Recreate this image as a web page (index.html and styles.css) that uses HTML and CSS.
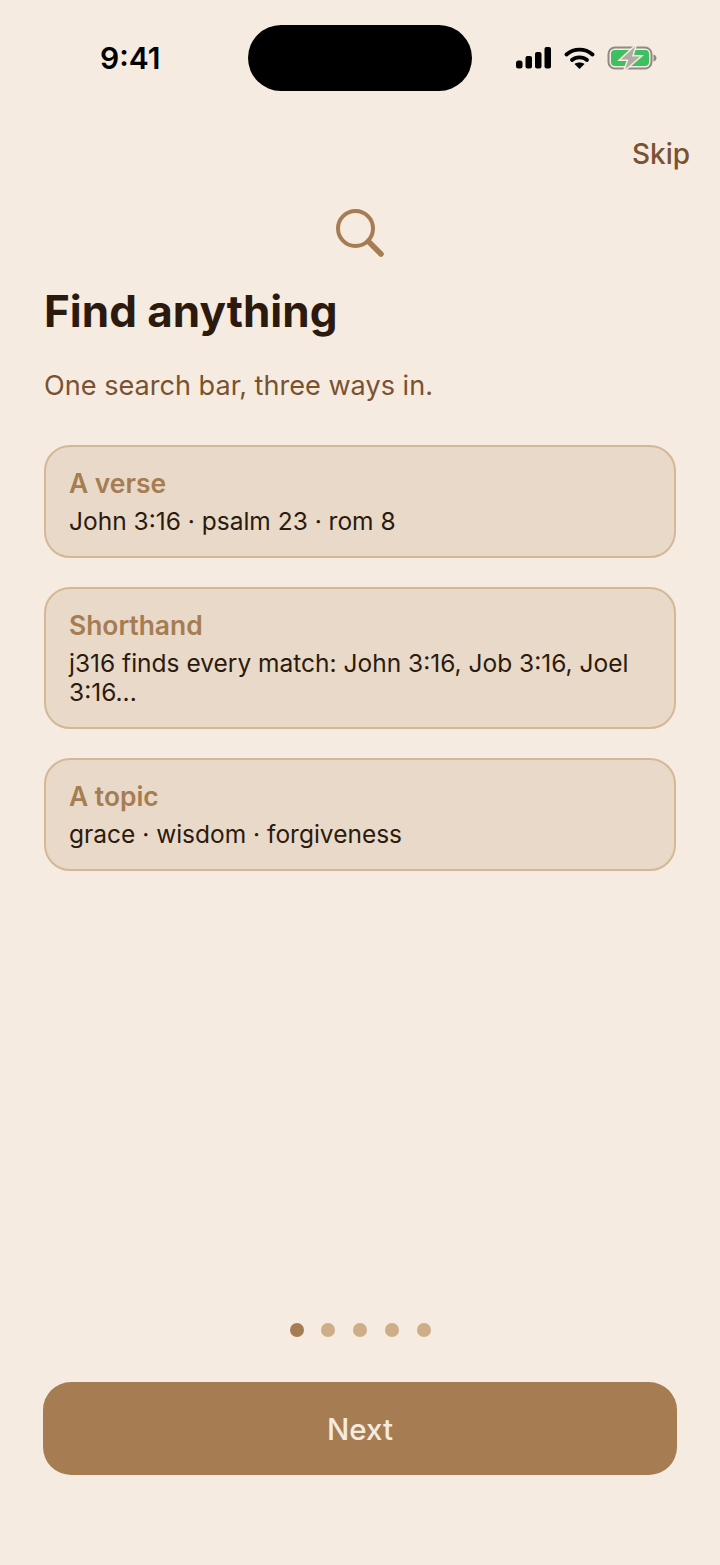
FILE: index.html
```html
<!DOCTYPE html>
<html lang="en">
<head>
    <meta charset="UTF-8">
    <title>Find anything</title>
    <link rel="stylesheet" href="styles.css">
</head>

<body>
<div class="screen">
    <!-- Status Bar -->
    <div class="status-bar">
        <span class="time">9:41</span>
        <div class="island"></div>
        <div class="status-icons">
            <svg width="35" height="22" viewBox="0 0 35 22">
                <rect x="0" y="13.500" width="6.500" height="8" rx="2.500" fill="#000"/>
                <rect x="9.500" y="9" width="6.500" height="12.500" rx="2" fill="#000"/>
                <rect x="19" y="5" width="6.500" height="16.500" rx="2" fill="#000"/>
                <rect x="28.500" y="0" width="6.500" height="21.500" rx="2" fill="#000"/>
            </svg>
            <svg class="wifi" width="31" height="22" viewBox="0 0 31 22">
                <path d="M2.500 7.500 C10 1 21 1 28.500 7.500" fill="none" stroke="#000" stroke-width="3.800" stroke-linecap="round"/>
                <path d="M8 13 C12 9.500 19 9.500 23 13" fill="none" stroke="#000" stroke-width="3.800" stroke-linecap="round"/>
                <path d="M10.500 17 C13 15 18 15 20.500 17 L15.500 22 Z" fill="#000"/>
            </svg>
            <svg class="battery" width="50" height="24" viewBox="0 0 50 24">
                <rect x="1.500" y="1.500" width="43" height="21" rx="6.500" fill="none" stroke="#8f8b84" stroke-width="2"/>
                <rect x="4" y="4" width="38" height="16" rx="4" fill="#3fc060"/>
                <path d="M46.500 8.500 C48.500 9 49.500 10.500 49.500 12 C49.500 13.500 48.500 15 46.500 15.500 Z" fill="#8f8b84"/>
                <path d="M28 0.500 L14 13.500 H21.500 L18 23.500 L33 10.500 H25 Z" fill="#b1aca3" stroke="#f5ebe0" stroke-width="3" paint-order="stroke"/>
            </svg>
        </div>
    </div>

    <div class="skip-row">
        <span class="skip">Skip</span>
    </div>

    <div class="hero-icon">
        <svg width="50" height="50" viewBox="0 0 50 50">
            <circle cx="20.500" cy="20.500" r="17.500" fill="none" stroke="#a67c52" stroke-width="4"/>
            <path d="M33.500 33.500 L46 46" fill="none" stroke="#a67c52" stroke-width="5.500" stroke-linecap="round"/>
        </svg>
    </div>

    <!-- Content -->
    <div class="content">
        <h1>Find anything</h1>
        <p class="subtitle">One search bar, three ways in.</p>

        <div class="card">
            <div class="card-title">A verse</div>
            <div class="card-text">John 3:16 · psalm 23 · rom 8</div>
        </div>
        <div class="card">
            <div class="card-title">Shorthand</div>
            <div class="card-text">j316 finds every match: John 3:16, Job 3:16, Joel 3:16...</div>
        </div>
        <div class="card">
            <div class="card-title">A topic</div>
            <div class="card-text">grace · wisdom · forgiveness</div>
        </div>
    </div>

    <!-- Footer -->
    <div class="footer">
        <div class="dots">
            <span class="dot active"></span>
            <span class="dot"></span>
            <span class="dot"></span>
            <span class="dot"></span>
            <span class="dot"></span>
        </div>
        <button class="next">Next</button>
    </div>
</div>
</body>
</html>
```

FILE: styles.css
```css
* {
    box-sizing: border-box;
}
body {
    margin: 0;
    background-color: #f5ebe0;
    font-family: Inter, "Liberation Sans", sans-serif;
}
.screen {
    height: 1565px;
    display: flex;
    flex-direction: column;
    overflow: hidden;
}
.status-bar {
    height: 66px;
    margin-top: 25px;
    padding: 0 63px 0 100px;
    display: flex;
    align-items: center;
}
.time {
    width: 148px;
    flex-shrink: 0;
    font-size: 30px;
    font-weight: 600;
    color: #000;
}
.island {
    width: 224px;
    height: 66px;
    flex-shrink: 0;
    background: #000;
    border-radius: 33px;
}
.status-icons {
    flex: 1;
    display: flex;
    align-items: center;
    justify-content: flex-end;
    gap: 13px;
}
.wifi {
    margin-right: -1px;
}
.skip-row {
    margin-top: 45px;
    padding-right: 30px;
    display: flex;
    justify-content: flex-end;
}
.skip {
    font-size: 28px;
    line-height: 36px;
    font-weight: 500;
    color: #7a5230;
}
.hero-icon {
    margin-top: 36px;
    height: 52px;
    display: flex;
    justify-content: center;
}
.content {
    padding: 0 44px;
    flex: 1;
}
h1 {
    margin: 24px 0 0;
    font-size: 44px;
    line-height: 54px;
    font-weight: 700;
    color: #2c1a0e;
}
.subtitle {
    margin: 30px 0 41px;
    font-size: 27.100px;
    line-height: 36px;
    color: #7a5230;
}
.card {
    background: #e8d9c8;
    border: 2px solid #d4b896;
    border-radius: 26px;
    padding: 19px 23px 20px;
    margin-bottom: 29px;
}
.card-title {
    font-size: 26.400px;
    line-height: 34px;
    font-weight: 600;
    color: #a67c52;
}
.card-text {
    margin-top: 7px;
    font-size: 24.500px;
    line-height: 29px;
    color: #2c1a0e;
}
.footer {
    padding: 0 43px 90px;
}
.dots {
    display: flex;
    justify-content: center;
    gap: 17.750px;
    margin-bottom: 45px;
}
.dot {
    width: 14px;
    height: 14px;
    border-radius: 50%;
    background: #cdae88;
}
.dot.active {
    background: #a67c52;
}
.next {
    display: block;
    width: 100%;
    height: 93px;
    border: none;
    border-radius: 28px;
    background: #a67c52;
    color: #f5ebe0;
    font-family: inherit;
    font-size: 29.500px;
    font-weight: 500;
}
```
